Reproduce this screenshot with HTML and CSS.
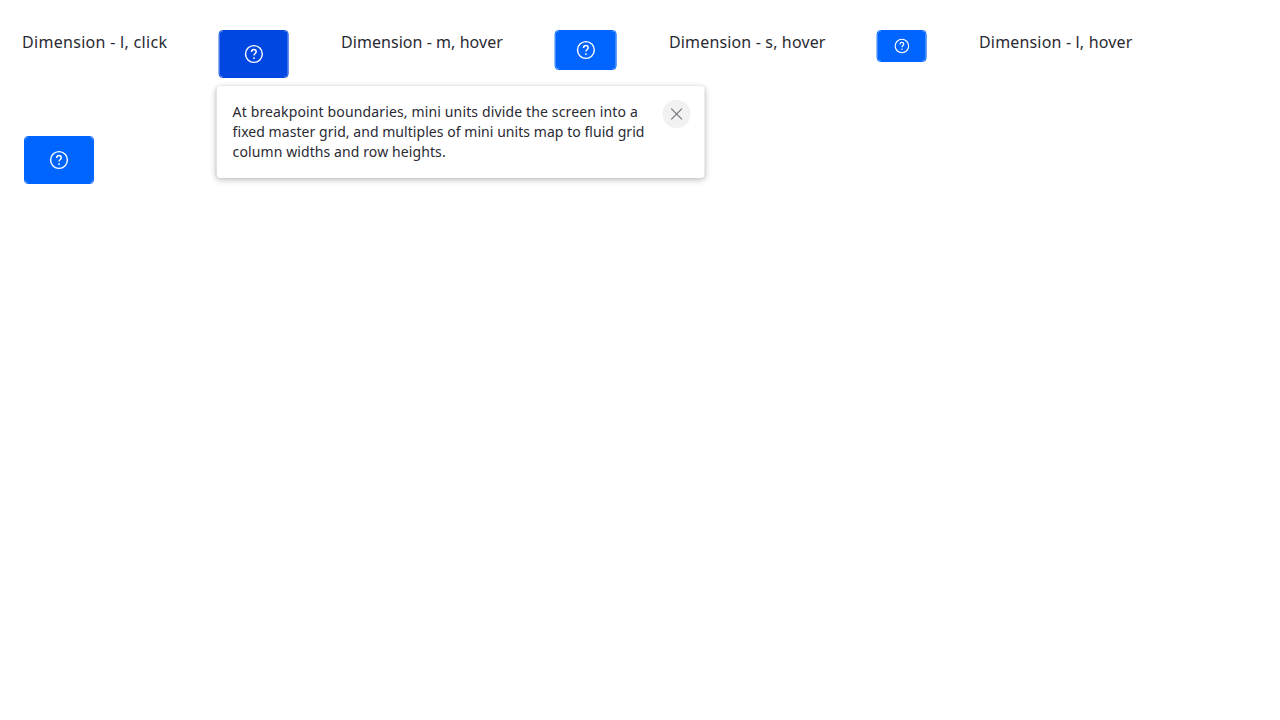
FILE: index.html
```html
<!DOCTYPE html>
<html lang="en">
<head>
<meta charset="utf-8">
<title>Toggletip dimensions</title>
<link rel="stylesheet" href="styles.css">
</head>
<body>
<svg class="defs" width="0" height="0" aria-hidden="true">
  <symbol id="help" viewBox="0 0 20 20">
    <circle cx="10" cy="10" r="8.4" fill="none" stroke="currentColor" stroke-width="1.4"/>
    <path d="M7.7 8V7.7a2.3 2.3 0 0 1 4.6 0c0 1.7-2.25 1.8-2.25 3.9" fill="none" stroke="currentColor" stroke-width="1.45"/>
    <circle cx="10.05" cy="14.1" r=".95" fill="currentColor"/>
  </symbol>
</svg>
<main class="examples">
  <div class="label label-click">Dimension - l, click</div>
  <div class="holder">
    <button class="button large active shifted" aria-label="Help"><span class="face"><svg class="icon"><use href="#help"/></svg></span></button>
    <div class="tooltip shifted" role="tooltip">
      <p class="message"><span class="line line-1">At breakpoint boundaries, mini units divide the screen into a</span><span class="line line-2">fixed master grid, and multiples of mini units map to fluid grid</span><span class="line line-3">column widths and row heights.</span></p>
      <button class="close" aria-label="Close"><svg width="12" height="12" viewBox="0 0 12 12"><path d="M.6.6l10.8 10.8M11.4.6L.6 11.4" fill="none" stroke="currentColor" stroke-width="1.1"/></svg></button>
    </div>
  </div>
  <div class="label label-m">Dimension - m, hover</div>
  <div class="holder"><button class="button medium shifted" aria-label="Help"><span class="face"><svg class="icon"><use href="#help"/></svg></span></button></div>
  <div class="label label-s">Dimension - s, hover</div>
  <div class="holder"><button class="button small shifted" aria-label="Help"><span class="face"><svg class="icon"><use href="#help"/></svg></span></button></div>
  <div class="label label-l">Dimension - l, hover</div>
  <div class="holder last"><button class="button large" aria-label="Help"><span class="face"><svg class="icon"><use href="#help"/></svg></span></button></div>
</main>
</body>
</html>
```
FILE: styles.css
```css
* { box-sizing: border-box; }
body {
  margin: 0;
  background: #fff;
  color: #2a2a33;
  font-family: "Noto Sans", "Open Sans", sans-serif;
}
.defs { display: block; }
.examples {
  display: grid;
  grid-template-columns: 197px 122px 214px 114px 208px 102px 210px;
  grid-auto-rows: 106px;
  padding: 30px 22px;
}
.label {
  font-size: 16px;
  line-height: 24px;
  white-space: nowrap;
}
.label-click { letter-spacing: 0.3px; }
.label-m { letter-spacing: 0.05px; }
.label-s { letter-spacing: 0.15px; }
.label-l { letter-spacing: 0.17px; }
.holder { position: relative; }
.last { padding-left: 2px; }
.button {
  display: block;
  padding: 0;
  border: 1px solid #0064ff;
  border-radius: 4px;
  background: transparent;
  color: #fff;
  --fill: #0064ff;
}
.active { --fill: #0046e1; border-color: #0046e1; }
.shifted { transform: translateX(-0.4px); }
.large { width: 70px; height: 48px; }
.medium { width: 62px; height: 40px; }
.small { width: 50px; height: 32px; }
.face {
  display: flex;
  align-items: center;
  justify-content: center;
  width: 100%;
  height: 100%;
  border-radius: 4px;
  background: var(--fill);
}
.icon { width: 20px; height: 20px; }
.shifted .icon { transform: translateX(0.3px); }
.small .icon { width: 16px; height: 16px; }
.tooltip {
  position: absolute;
  top: 56px;
  left: -2px;
  display: flex;
  justify-content: space-between;
  width: 488px;
  height: 92px;
  padding: 14px 14px 14px 16px;
  border-radius: 4px;
  background: #fff;
  box-shadow: 0 2px 6px rgba(0, 0, 0, .24), 0 0 3px rgba(0, 0, 0, .1);
}
.message {
  margin: 2px 0 0;
  font-size: 14px;
  line-height: 20px;
  white-space: nowrap;
}
.line { display: block; }
.line-1 { letter-spacing: 0.14px; }
.line-2 { letter-spacing: 0.05px; }
.line-3 { letter-spacing: 0.1px; }
.close {
  display: flex;
  align-items: center;
  justify-content: center;
  flex: none;
  width: 28px;
  height: 28px;
  padding: 0;
  border: 0;
  border-radius: 50%;
  background: #f1f1f1;
  color: #71717a;
}
```
